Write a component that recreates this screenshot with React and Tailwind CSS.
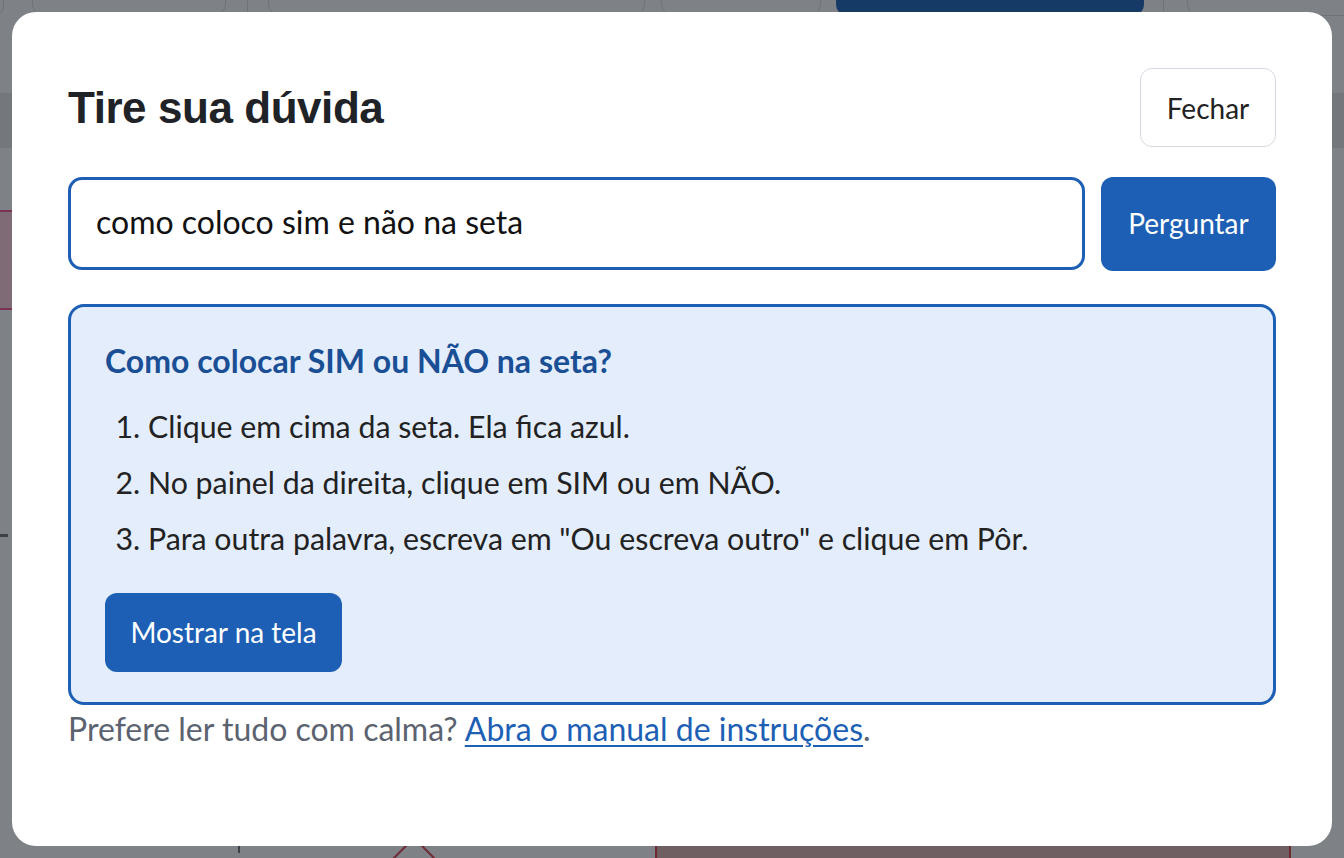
const sans = { fontFamily: 'Lato, "Noto Sans", sans-serif' }

function Backdrop() {
  // the app behind the dialog, dimmed by the overlay
  return (
    <div className="absolute inset-0 flex flex-col bg-[#7e8186]">
      <div className="-mt-6 flex h-[40px] shrink-0 [&>*]:shrink-0">
        <div className="-ml-4 w-[20px] rounded-xl border border-[#6f7277]" />
        <div className="ml-[28px] w-[194px] rounded-xl border border-[#6f7277]" />
        <div className="ml-[21px] mt-6 h-[14px] w-px bg-[#6f7277]" />
        <div className="ml-[20px] w-[377px] rounded-xl border border-[#6f7277]" />
        <div className="ml-[16px] w-[160px] rounded-xl border border-[#6f7277]" />
        <div className="ml-[15px] w-[308px] rounded-xl bg-[#163a66]" />
        <div className="ml-[19px] mt-6 h-[14px] w-px bg-[#6f7277]" />
        <div className="ml-[23px] w-[200px] rounded-xl border border-[#6f7277]" />
      </div>
      <div className="mt-[77px] h-[55px] shrink-0 bg-[#74777c]" />
      <div className="mt-[62px] h-[100px] w-[22px] shrink-0 border-y-2 border-[#7a3354] bg-[#7f6b75]" />
      <div className="mt-[224px] h-[3px] w-[8px] shrink-0 bg-[#3d4046]" />
      <div className="flex-1" />
      <div className="flex h-[18px] shrink-0 items-start [&>*]:shrink-0">
        <div className="ml-[238px] mt-[5px] h-[8px] w-[2px] bg-[#3d4046]" />
        <div className="ml-[156px] mt-[4px] h-[36px] w-[36px] rotate-45 border-2 border-[#6e2a33]" />
        <div className="ml-[223px] h-[30px] w-[636px] border-2 border-[#6e2a33] bg-[#6f5f63]" />
      </div>
    </div>
  )
}

export default function App() {
  return (
    <div className="relative h-[858px] w-full overflow-hidden">
      <Backdrop />

      <div
        className="absolute inset-3 flex flex-col rounded-[24px] bg-white px-14 pt-14"
        style={sans}
      >
        {/* Cabeçalho */}
        <div className="flex items-center justify-between">
          <h2
            className="text-[44px] font-bold tracking-[-0.01em] text-[#1f2328]"
            style={{ fontFamily: '"Liberation Sans", Arial, sans-serif' }}
          >
            Tire sua dúvida
          </h2>
          <button className="h-[79px] w-[136px] rounded-xl border border-[#d5dae2] bg-white text-[28px] text-[#222]">
            Fechar
          </button>
        </div>

        {/* Pergunta */}
        <div className="mt-[30px] flex gap-4">
          <div className="flex h-[93px] flex-1 items-center rounded-[14px] border-[3px] border-[#1d5fb4] px-[25px] pb-[3px] text-[32px] text-[#111]">
            como coloco sim e não na seta
          </div>
          <button className="h-[94px] w-[175px] rounded-xl bg-[#1d5fb4] pb-[3px] text-[28px] text-white">
            Perguntar
          </button>
        </div>

        {/* Resposta */}
        <div className="mt-[33px] rounded-2xl border-[3px] border-[#1d5fb4] bg-[#e3edfb] px-[34px] pb-[30px] pt-[34px]">
          <h3 className="text-[32px] font-bold leading-[40px] text-[#1a4f96]">
            Como colocar SIM ou NÃO na seta?
          </h3>
          <ol className="mt-[24px] list-decimal space-y-[14px] pl-[43px] text-[30.3px] leading-[42px] text-[#222]">
            <li>Clique em cima da seta. Ela fica azul.</li>
            <li>No painel da direita, clique em SIM ou em NÃO.</li>
            <li>Para outra palavra, escreva em "Ou escreva outro" e clique em Pôr.</li>
          </ol>
          <button className="mt-[34px] h-[79px] w-[237px] rounded-xl bg-[#1d5fb4] pb-[2px] text-[28px] text-white">
            Mostrar na tela
          </button>
        </div>

        <p className="mt-[4px] text-[32px] leading-[40px] text-[#5c6370]">
          Prefere ler tudo com calma?{' '}
          <a href="#" className="text-[#1d5fb4] underline decoration-2 underline-offset-4">
            Abra o manual de instruções
          </a>
          .
        </p>
      </div>
    </div>
  )
}
